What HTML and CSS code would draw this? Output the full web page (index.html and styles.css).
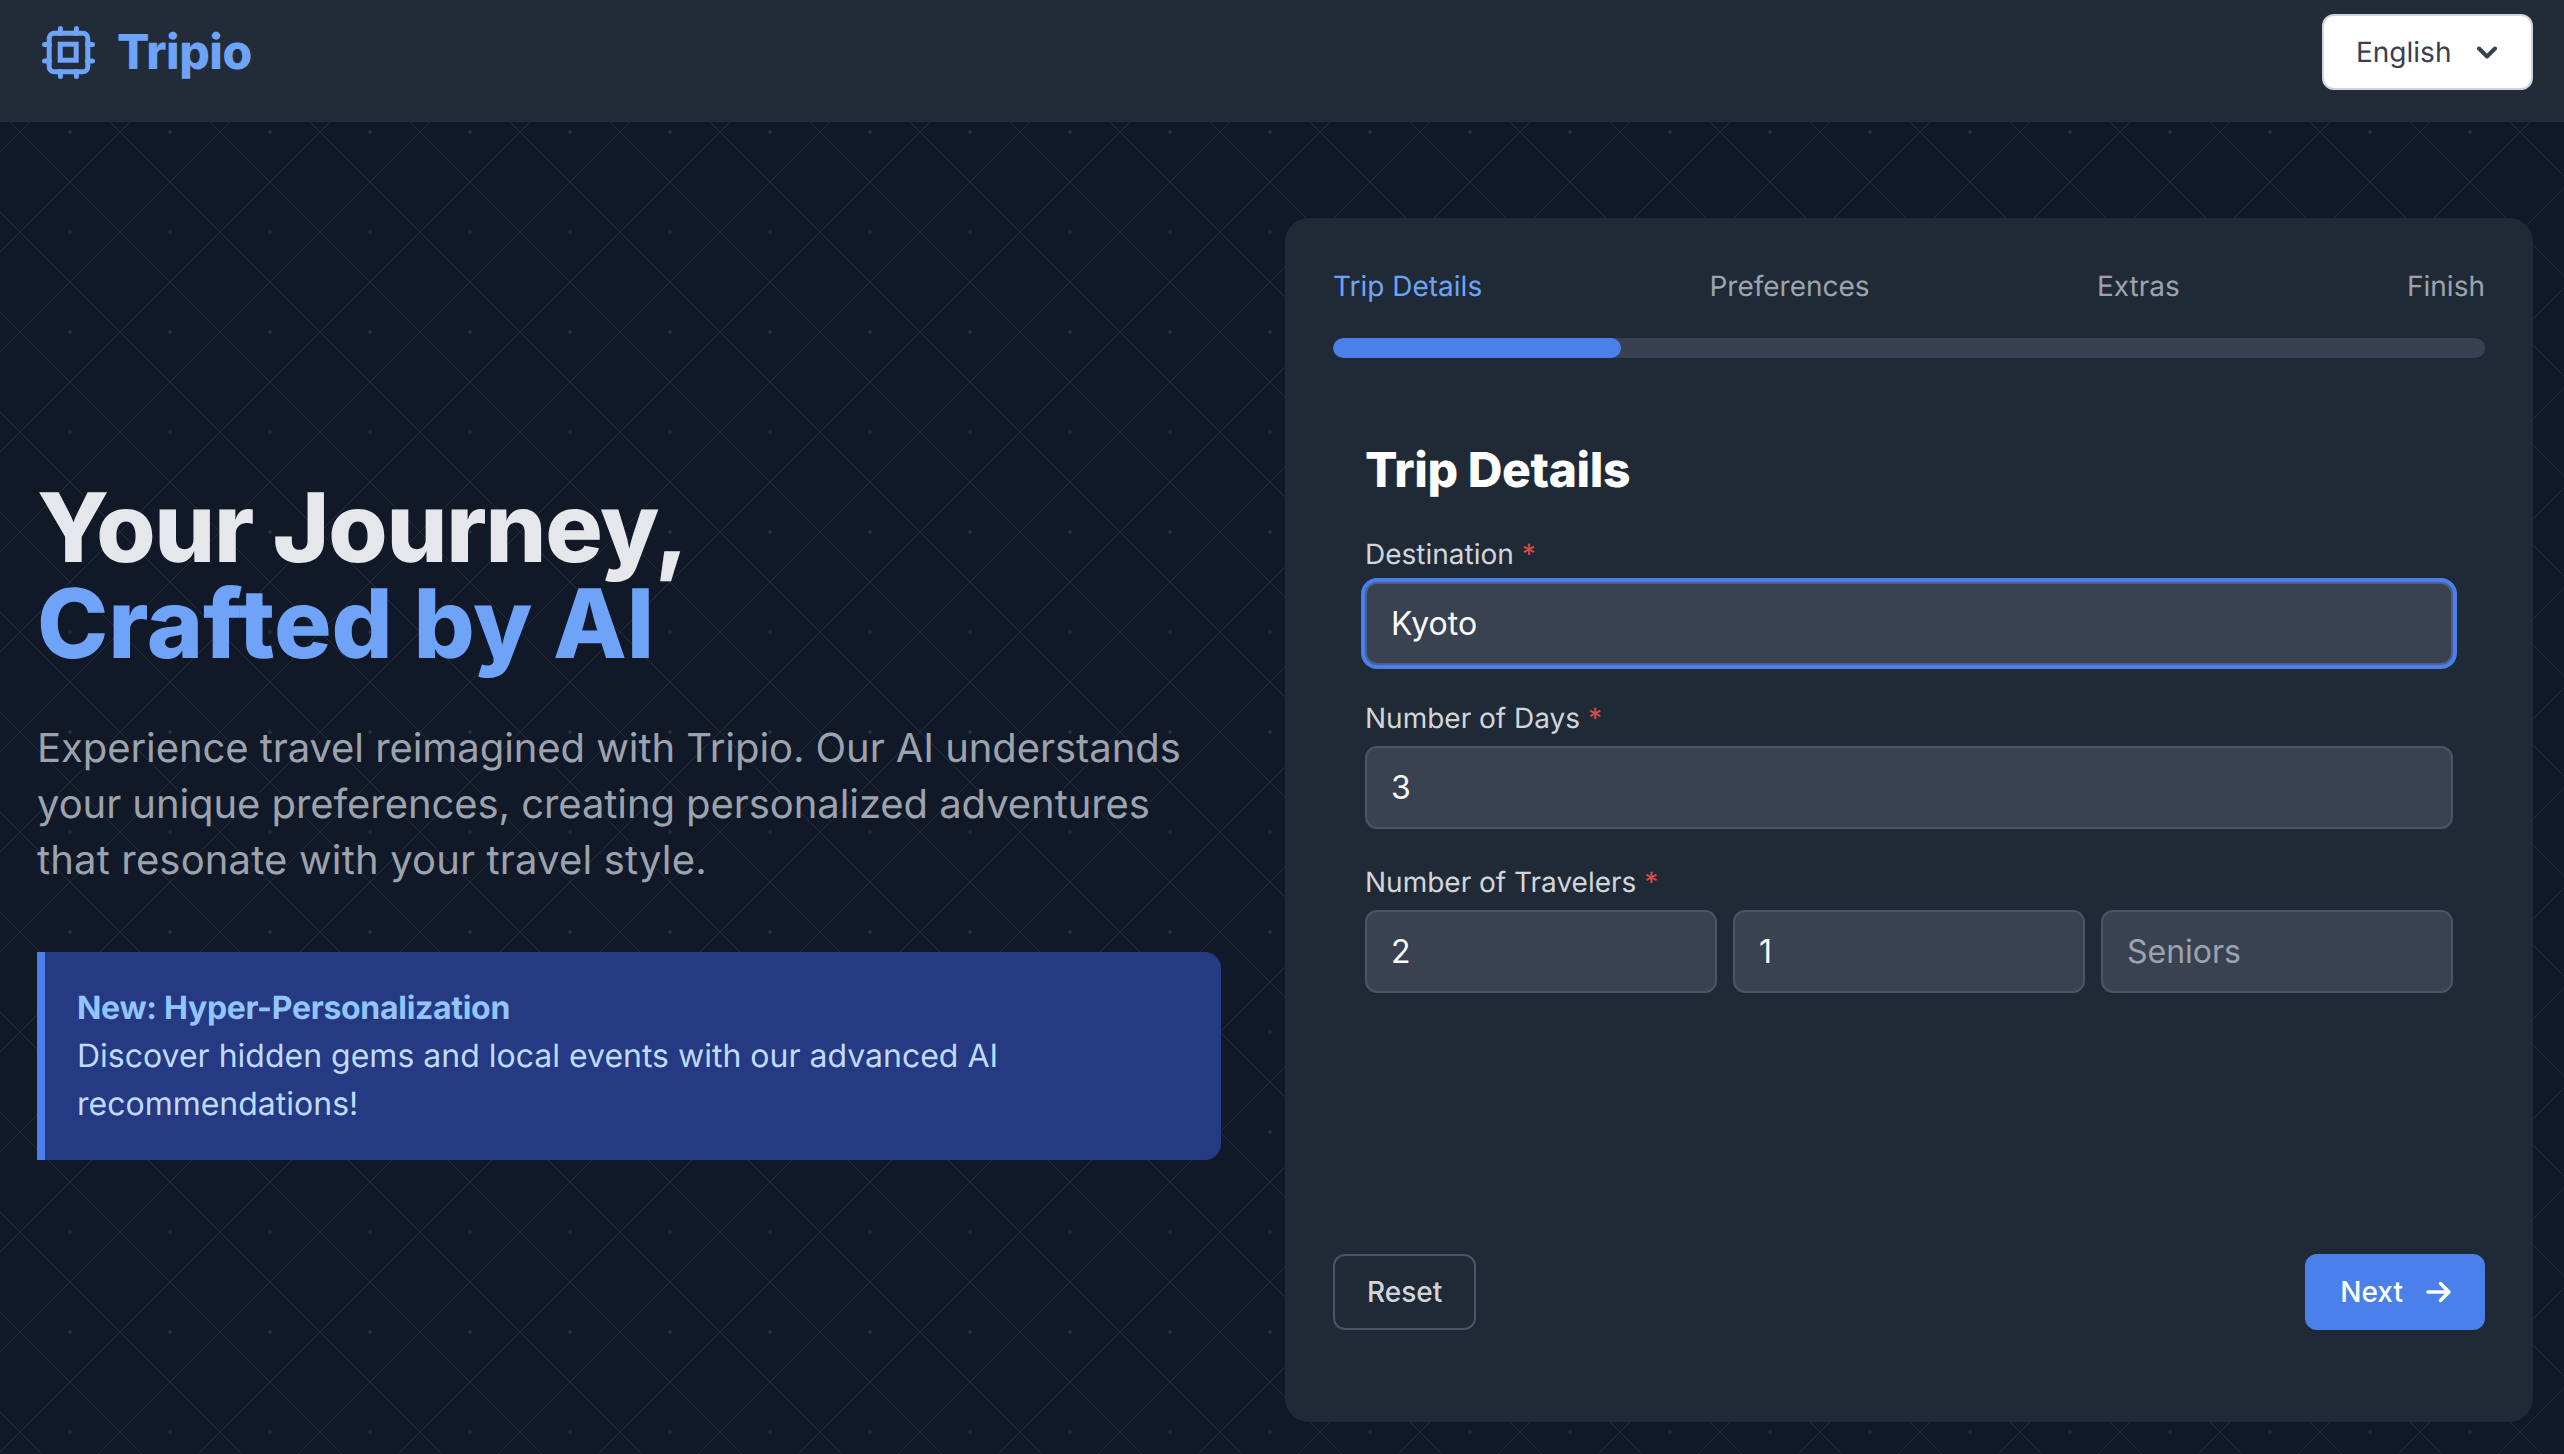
FILE: index.html
```html
<!DOCTYPE html>
<html lang="en">
<head>
<meta charset="utf-8">
<title>Tripio</title>
<link rel="stylesheet" href="styles.css">
</head>
<body>
<svg class="backdrop" aria-hidden="true">
  <defs>
    <pattern id="diamonds" width="100" height="100" patternUnits="userSpaceOnUse" x="20" y="32">
      <path class="backdrop-line" d="M0 0L100 100M100 0L0 100"/>
      <circle class="backdrop-dot" cx="50" cy="0" r="2"/>
      <circle class="backdrop-dot" cx="50" cy="100" r="2"/>
    </pattern>
  </defs>
  <rect width="100%" height="100%" fill="url(#diamonds)"/>
</svg>
<header class="topbar">
  <div class="brand">
    <svg class="brand-icon" viewBox="0 0 53 53" aria-hidden="true">
      <rect x="7.2" y="7.2" width="38.6" height="38.6" rx="5"/>
      <rect x="18.2" y="18.2" width="16" height="16"/>
      <path d="M18.4 2.5v5M34.4 2.5v5M18.4 45.500v5M34.400 45.500v5M2.500 18.400h5M2.500 35h5M45.500 18.400h5M45.500 35h5"/>
    </svg>
    <span class="brand-name">Tripio</span>
  </div>
  <div class="lang">
    <span>English</span>
    <svg class="lang-chevron" viewBox="0 0 20 13" aria-hidden="true"><path d="M2 2.500l8 8 8-8"/></svg>
  </div>
</header>
<main class="layout">
  <section class="hero">
    <h1 class="hero-title"><span class="hero-plain">Your Journey,</span><span class="hero-accent">Crafted by AI</span></h1>
    <p class="hero-text">Experience travel reimagined with Tripio. Our AI understands your unique preferences, creating personalized adventures <span class="hero-wide">that resonate with your travel style.</span></p>
    <div class="notice">
      <strong class="notice-title">New: Hyper-Personalization</strong>
      <p class="notice-text">Discover hidden gems and local events with our advanced AI recommendations!</p>
    </div>
  </section>
  <section class="panel">
    <div class="steps">
      <span class="step step-active">Trip Details</span>
      <span class="step">Preferences</span>
      <span class="step">Extras</span>
      <span class="step">Finish</span>
    </div>
    <div class="progress"><div class="progress-fill"></div></div>
    <form class="form">
      <h2 class="form-title">Trip Details</h2>
      <div class="field">
        <label class="label">Destination <span class="req">*</span></label>
        <input class="input input-focus" type="text" value="Kyoto">
      </div>
      <div class="field">
        <label class="label">Number of Days <span class="req">*</span></label>
        <input class="input" type="text" value="3">
      </div>
      <div class="field">
        <label class="label">Number of Travelers <span class="req">*</span></label>
        <div class="triple">
          <input class="input" type="text" value="2">
          <input class="input" type="text" value="1">
          <input class="input" type="text" placeholder="Seniors">
        </div>
      </div>
    </form>
    <div class="actions">
      <button class="btn btn-ghost" type="button">Reset</button>
      <button class="btn btn-primary" type="button">Next
        <svg class="btn-arrow" viewBox="0 0 26 22" aria-hidden="true"><path d="M2 11h21M14.500 2.500l8.500 8.500-8.500 8.500"/></svg>
      </button>
    </div>
  </section>
</main>
</body>
</html>
```
FILE: styles.css
```css
* { box-sizing: border-box; }
html, body { margin: 0; height: 100%; }
body {
  display: flex;
  flex-direction: column;
  height: 100vh;
  overflow: hidden;
  background: #111827;
  color: #f3f4f6;
  font-family: Inter, "Liberation Sans", sans-serif;
  text-rendering: geometricPrecision;
  position: relative;
}
.backdrop { position: absolute; inset: 0; width: 100%; height: 100%; }
.backdrop-line { fill: none; stroke: #232b3c; stroke-width: 1; }
.backdrop-dot { fill: #242c3d; }

.topbar {
  position: relative;
  flex: none;
  height: 122px;
  background: #222c38;
  display: flex;
  justify-content: space-between;
  align-items: center;
  padding: 0 31px 18px 42px;
}
.brand { display: flex; align-items: center; gap: 22px; }
.brand-icon { width: 53px; height: 53px; fill: none; stroke: #6ea3f8; stroke-width: 5; stroke-linecap: round; }
.brand-name { font-size: 48px; line-height: 64px; font-weight: 800; letter-spacing: -0.5px; color: #6ea3f8; }
.lang {
  width: 211px;
  height: 76px;
  background: #fff;
  border: 2px solid #d1d5db;
  border-radius: 12px;
  color: #374151;
  font-size: 28px;
  display: flex;
  align-items: center;
  justify-content: space-between;
  padding: 0 34px 0 32px;
}
.lang-chevron { width: 20px; height: 13px; fill: none; stroke: #374151; stroke-width: 4; stroke-linecap: round; stroke-linejoin: round; }

.layout {
  position: relative;
  flex: 1;
  min-height: 0;
  display: grid;
  grid-template-columns: 1184px 1248px;
  column-gap: 64px;
  padding: 96px 31px 32px 37px;
}
.hero { align-self: center; }
.hero-title { margin: 0 0 48px; font-size: 96px; line-height: 96px; font-weight: 800; color: #e5e7eb; }
.hero-plain { display: block; letter-spacing: -1.25px; }
.hero-accent { display: block; letter-spacing: -0.1px; color: #6ea3f8; }
.hero-text { margin: 0 0 64px; font-size: 40px; line-height: 56px; color: #9ca3af; letter-spacing: -0.07px; }
.hero-wide { letter-spacing: 0.16px; }
.notice {
  background: #253a82;
  border-left: 8px solid #4b7fea;
  border-radius: 0 16px 16px 0;
  padding: 32px;
  font-size: 32px;
  line-height: 48px;
}
.notice-title { display: block; font-weight: 700; letter-spacing: -0.3px; color: #93c5fd; }
.notice-text { margin: 0; color: #bfdbfe; }

.panel {
  background: #202a36;
  border-radius: 24px;
  padding: 48px 48px 92px;
  display: flex;
  flex-direction: column;
}
.steps { display: flex; justify-content: space-between; font-size: 28px; line-height: 40px; color: #9ca3af; }
.step-active { color: #6ea3f8; }
.progress { height: 20px; margin: 32px 0 48px; background: #374151; border-radius: 10px; overflow: hidden; }
.progress-fill { width: 25%; height: 100%; background: #4b7fea; border-radius: 10px; }
.form { flex: 1; padding: 32px 32px 0; }
.form-title { margin: 0 0 32px; font-size: 48px; line-height: 64px; font-weight: 800; letter-spacing: -0.4px; color: #fff; }
.field { margin-bottom: 33px; }
.label { display: block; margin-bottom: 8px; font-size: 28px; line-height: 40px; font-weight: 400; color: #d1d5db; }
.req { color: #dc4a46; }
.input {
  display: block;
  width: 100%;
  height: 83px;
  padding: 0 24px;
  background: #3a4252;
  border: 2px solid #4b5563;
  border-radius: 12px;
  color: #f9fafb;
  font: 400 32px Inter, "Liberation Sans", sans-serif;
  outline: none;
}
.input::placeholder { color: #9ca3af; opacity: 1; }
.input-focus { box-shadow: 0 0 0 4px #4b7fea; border-color: #4a5f96; }
.triple { display: grid; grid-template-columns: repeat(3, 1fr); gap: 16px; }
.actions { display: flex; justify-content: space-between; }
.btn {
  height: 76px;
  border-radius: 12px;
  font: 500 28px Inter, "Liberation Sans", sans-serif;
  display: flex;
  align-items: center;
}
.btn-ghost { background: transparent; border: 2px solid #4b5563; color: #d1d5db; padding: 0 32px; }
.btn-primary { background: #4b7fea; border: 0; color: #fff; gap: 23px; padding: 0 33px 0 35px; }
.btn-arrow { width: 26px; height: 22px; fill: none; stroke: #fff; stroke-width: 3.500; stroke-linecap: round; stroke-linejoin: round; }
```
